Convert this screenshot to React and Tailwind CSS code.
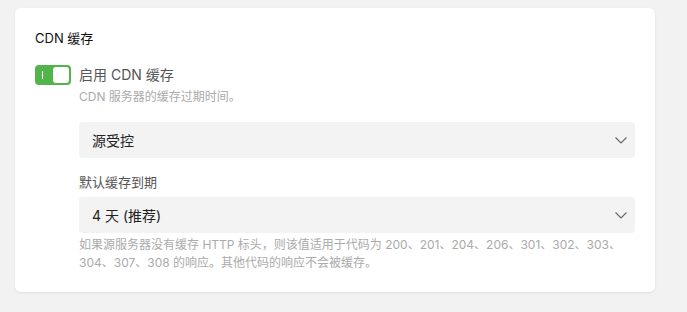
const Chevron = () => (
  <svg width="14" height="14" viewBox="0 0 14 14" fill="none" className="text-[#666]">
    <path d="M1.5 4.5 L7 10 L12.5 4.5" stroke="currentColor" strokeWidth="1.1" />
  </svg>
);

const Select = ({ value }) => (
  <div className="flex items-center justify-between h-9 rounded bg-[#f3f3f3] pl-[13px] pr-[7px]">
    <span className="text-[14px] text-[#222]">{value}</span>
    <Chevron />
  </div>
);

export default function App() {
  return (
    <div
      className="min-h-screen bg-[#f2f2f2] pt-2 pl-[15px] pr-8"
      style={{ fontFamily: "Inter, 'Noto Sans CJK SC', sans-serif" }}
    >
      <div className="w-[640px] h-[284px] bg-white rounded-md shadow-[0_1px_3px_rgba(0,0,0,0.08)] pt-[22px] pl-5 pr-5">
        {/* title */}
        <h2 className="text-[13px] text-[#111] leading-4">CDN 缓存</h2>

        {/* toggle */}
        <div className="mt-[18px] flex items-center gap-2">
          <div className="w-9 h-5 rounded bg-[#52b54b] flex items-center justify-between p-[2px]">
            <span className="ml-[5px] w-px h-2 bg-white"></span>
            <span className="w-4 h-4 rounded-[3px] bg-white"></span>
          </div>
          <span className="text-[14px] text-[#555]">启用 CDN 缓存</span>
        </div>
        <p className="ml-11 mt-[3px] text-[12px] text-[#aaa]">CDN 服务器的缓存过期时间。</p>

        <div className="ml-11 mt-[16px]">
          <Select value="源受控" />
          <div className="mt-[16px] text-[13px] text-[#555] leading-4">默认缓存到期</div>
          <div className="mt-[7px]">
            <Select value="4 天 (推荐)" />
          </div>
          <p className="mt-[3px] text-[12px] leading-[18px] text-[#aaa]">
            如果源服务器没有缓存 HTTP 标头，则该值适用于代码为 200、201、204、206、301、302、303、304、307、308 的响应。其他代码的响应不会被缓存。
          </p>
        </div>
      </div>
    </div>
  );
}
